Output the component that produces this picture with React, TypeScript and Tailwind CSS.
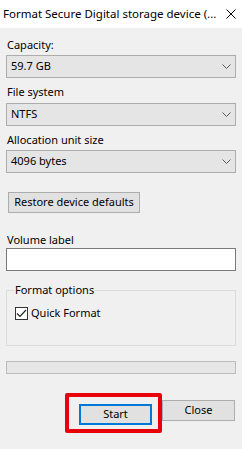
const font = { fontFamily: '"Noto Sans", "Open Sans", sans-serif' };

const Combo = ({ value }: { value: string }) => (
  <div className="flex h-[23px] items-center justify-between border border-[#adadad] bg-[#e5e5e5] pl-[4px] pr-[3px] text-[11px] text-black">
    <span>{value}</span>
    <svg width="9" height="5" viewBox="0 0 9 5" className="mr-[1px]">
      <path d="M0.5 0.5 L4.5 4.5 L8.5 0.5" fill="none" stroke="#5a5a5a" strokeWidth="1" />
    </svg>
  </div>
);

const Label = ({ children, className = "" }: { children: React.ReactNode; className?: string }) => (
  <div className={`h-[16px] text-[11px] leading-[16px] text-black ${className}`}>{children}</div>
);

export default function App() {
  return (
    <div className="flex h-[449px] w-[242px] flex-col bg-[#f0f0f0]" style={font}>
      {/* Title bar */}
      <div className="flex h-[28px] shrink-0 items-center justify-between bg-white pl-[3px] pr-[6px]">
        <span className="whitespace-nowrap text-[11.5px] text-black">Format Secure Digital storage device (...</span>
        <svg width="10" height="10" viewBox="0 0 10 10">
          <path d="M0.5 0.5 L9.5 9.5 M9.5 0.5 L0.5 9.5" stroke="#000" strokeWidth="1" />
        </svg>
      </div>

      <div className="flex flex-col px-[6px]">
        <Label className="mt-[9px] mb-[2px] pl-[1px]">Capacity:</Label>
        <Combo value="59.7 GB" />

        <Label className="mt-[6px] mb-[3px] pl-[1px]">File system</Label>
        <Combo value="NTFS" />

        <Label className="mt-[6px] mb-[2px] pl-[1px]">Allocation unit size</Label>
        <Combo value="4096 bytes" />

        <button className="mt-[19px] ml-[2px] h-[21px] w-[132px] whitespace-nowrap border border-[#adadad] bg-[#e1e1e1] text-[11px] text-black">
          Restore device defaults
        </button>

        <Label className="mt-[19px] mb-[0px] pl-[1px]">Volume label</Label>
        <div className="h-[23px] border border-[#7a7a7a] bg-white" />

        {/* Format options group */}
        <div className="relative mt-[19px] h-[56px] border border-[#dcdcdc]">
          <span className="absolute -top-[9px] left-[7px] bg-[#f0f0f0] px-[1px] text-[11px] leading-[16px] text-black">
            Format options
          </span>
          <div className="mt-[14px] ml-[8px] flex items-center gap-[3px]">
            <div className="flex h-[13px] w-[13px] items-center justify-center border border-[#333333] bg-white">
              <svg width="11" height="9" viewBox="0 0 11 9">
                <path d="M1 4.5 L4 7.5 L10 1" fill="none" stroke="#222" strokeWidth="1.2" />
              </svg>
            </div>
            <span className="text-[11px] leading-[16px] text-black">Quick Format</span>
          </div>
        </div>

        {/* Progress */}
        <div className="mt-[15px] h-[13px] border border-[#bcbcbc] bg-[#e6e6e6]" />

        <div className="mt-[26px] flex justify-end gap-[10px] pr-[1px]">
          <div className="relative">
            <button className="h-[21px] w-[73px] border-2 border-[#0078d7] bg-[#e1e1e1] text-[11px] text-black">
              Start
            </button>
            <div className="pointer-events-none absolute -top-[7px] -bottom-[8px] -left-[14px] -right-[10px] rounded-[2px] border-[4px] border-[#e8000b]" />
          </div>
          <button className="h-[21px] w-[73px] border border-[#adadad] bg-[#e1e1e1] text-[11px] text-black">
            Close
          </button>
        </div>
      </div>
    </div>
  );
}
